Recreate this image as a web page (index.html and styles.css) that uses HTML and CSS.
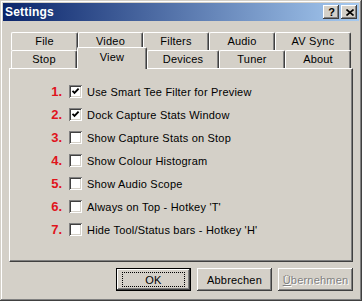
FILE: index.html
```html
<!DOCTYPE html>
<html>
<head>
<meta charset="utf-8">
<link rel="stylesheet" href="styles.css">
</head>
<body>
<div class="window">
  <div class="titlebar">
    <span class="title">Settings</span>
    <div class="tb-buttons">
      <div class="tb-btn help">?</div>
      <div class="tb-btn close">
        <svg width="8" height="7" viewBox="0 0 8 7"><path d="M0.5 0.5 L7.5 6.5 M7.5 0.5 L0.5 6.5" stroke="#000" stroke-width="1.6" fill="none"/></svg>
      </div>
    </div>
  </div>
  <div class="body">
    <div class="tabctl">
      <div class="tabrow">
        <div class="tab w67">File</div>
        <div class="tab w65">Video</div>
        <div class="tab w66">Filters</div>
        <div class="tab w66">Audio</div>
        <div class="tab w76">AV Sync</div>
      </div>
      <div class="tabrow">
        <div class="tab w66">Stop</div>
        <div class="tab w70 selected">View</div>
        <div class="tab w72">Devices</div>
        <div class="tab w66">Tuner</div>
        <div class="tab w66">About</div>
      </div>
      <div class="panel">
        <div class="opt"><span class="num">1.</span><span class="cb checked"><svg width="9" height="9" viewBox="0 0 9 9"><path d="M1.5 3.8 L3.5 5.8 L7.6 1.7" stroke="#000" stroke-width="1.9" fill="none"/></svg></span><span class="lbl">Use Smart Tee Filter for Preview</span></div>
        <div class="opt"><span class="num">2.</span><span class="cb checked"><svg width="9" height="9" viewBox="0 0 9 9"><path d="M1.5 3.8 L3.5 5.8 L7.6 1.7" stroke="#000" stroke-width="1.9" fill="none"/></svg></span><span class="lbl">Dock Capture Stats Window</span></div>
        <div class="opt"><span class="num">3.</span><span class="cb"></span><span class="lbl">Show Capture Stats on Stop</span></div>
        <div class="opt"><span class="num">4.</span><span class="cb"></span><span class="lbl">Show Colour Histogram</span></div>
        <div class="opt"><span class="num">5.</span><span class="cb"></span><span class="lbl">Show Audio Scope</span></div>
        <div class="opt"><span class="num">6.</span><span class="cb"></span><span class="lbl">Always on Top - Hotkey 'T'</span></div>
        <div class="opt"><span class="num">7.</span><span class="cb"></span><span class="lbl">Hide Tool/Status bars - Hotkey 'H'</span></div>
      </div>
    </div>
    <div class="buttons">
      <div class="btn default"><span class="focus">OK</span></div>
      <div class="btn">Abbrechen</div>
      <div class="btn disabled"><span class="acc">Ü</span>bernehmen</div>
    </div>
  </div>
</div>
</body>
</html>
```

FILE: styles.css
```css
html, body {
  margin: 0;
  padding: 0;
  background: #d4d0c8;
}
body {
  font-family: "Liberation Sans", Arial, sans-serif;
  font-size: 11px;
  color: #000;
}
.window {
  width: 362px;
  height: 301px;
  box-sizing: border-box;
  padding: 3px;
  background: #d4d0c8;
  box-shadow: inset -1px -1px #404040, inset 1px 1px #d4d0c8, inset -2px -2px #808080, inset 2px 2px #ffffff;
  display: flex;
  flex-direction: column;
}
.titlebar {
  height: 18px;
  background: linear-gradient(to right, #0a246a, #a6caf0);
  display: flex;
  align-items: center;
  justify-content: space-between;
  padding-left: 2px;
  padding-right: 2px;
}
.title {
  color: #fff;
  font-weight: bold;
  font-size: 12px;
  letter-spacing: 0.2px;
}
.tb-buttons {
  display: flex;
  gap: 2px;
}
.tb-btn {
  width: 16px;
  height: 14px;
  box-sizing: border-box;
  background: #d4d0c8;
  box-shadow: inset -1px -1px #404040, inset 1px 1px #ffffff, inset -2px -2px #808080, inset 2px 2px #d4d0c8;
  display: flex;
  align-items: center;
  justify-content: center;
}
.tb-btn.help {
  font-weight: bold;
  font-size: 11px;
  line-height: 14px;
  padding-left: 1px;
}
.tb-btn.close svg {
  margin-left: 1px;
}
.body {
  flex: 1;
  padding: 11px 6px 0 6px;
  display: flex;
  flex-direction: column;
}
.tabctl {
  display: flex;
  flex-direction: column;
}
.tabrow {
  display: flex;
  height: 18px;
  padding-left: 2px;
}
.tab {
  box-sizing: border-box;
  height: 18px;
  border-top: 1px solid #fff;
  border-left: 1px solid #fff;
  border-right: 1px solid #404040;
  border-radius: 2px 2px 0 0;
  box-shadow: inset -1px 0 #808080;
  display: flex;
  align-items: center;
  justify-content: center;
  letter-spacing: 0.2px;
  padding-bottom: 1px;
}
.tab.selected {
  position: relative;
  z-index: 1;
  height: 22px;
  margin-top: -3px;
  background: #d4d0c8;
  padding-bottom: 3px;
}
.w65 { width: 65px; }
.w66 { width: 66px; }
.w67 { width: 67px; }
.w70 { width: 70px; }
.w72 { width: 72px; }
.w76 { width: 76px; }
.panel {
  height: 194px;
  box-sizing: border-box;
  border-top: 1px solid #fff;
  border-left: 1px solid #fff;
  border-right: 1px solid #404040;
  border-bottom: 1px solid #404040;
  box-shadow: inset -1px -1px #808080;
  padding-top: 11px;
  padding-left: 30px;
}
.opt {
  display: flex;
  align-items: center;
  height: 23px;
}
.num {
  width: 22px;
  text-align: right;
  color: #e0141c;
  font-weight: bold;
  font-size: 13px;
  margin-right: 7px;
}
.cb {
  width: 13px;
  height: 13px;
  box-sizing: border-box;
  background: #fff;
  box-shadow: inset 1px 1px #808080, inset -1px -1px #ffffff, inset 2px 2px #404040, inset -2px -2px #d4d0c8;
  display: flex;
  align-items: center;
  justify-content: center;
  margin-right: 5px;
}
.lbl {
  letter-spacing: 0.2px;
}
.buttons {
  display: flex;
  justify-content: flex-end;
  gap: 6px;
  margin-top: 6px;
}
.btn {
  width: 75px;
  height: 23px;
  box-sizing: border-box;
  background: #d4d0c8;
  box-shadow: inset -1px -1px #404040, inset 1px 1px #ffffff, inset -2px -2px #808080, inset 2px 2px #d4d0c8;
  display: flex;
  align-items: center;
  justify-content: center;
  letter-spacing: 0.2px;
}
.btn.default {
  border: 1px solid #000;
}
.btn.default .focus {
  width: 61px;
  height: 13px;
  border: 1px dotted #000;
  display: flex;
  align-items: center;
  justify-content: center;
}
.btn.disabled {
  color: #808080;
  text-shadow: 1px 1px #ffffff;
}
.acc {
  text-decoration: underline;
}
```
